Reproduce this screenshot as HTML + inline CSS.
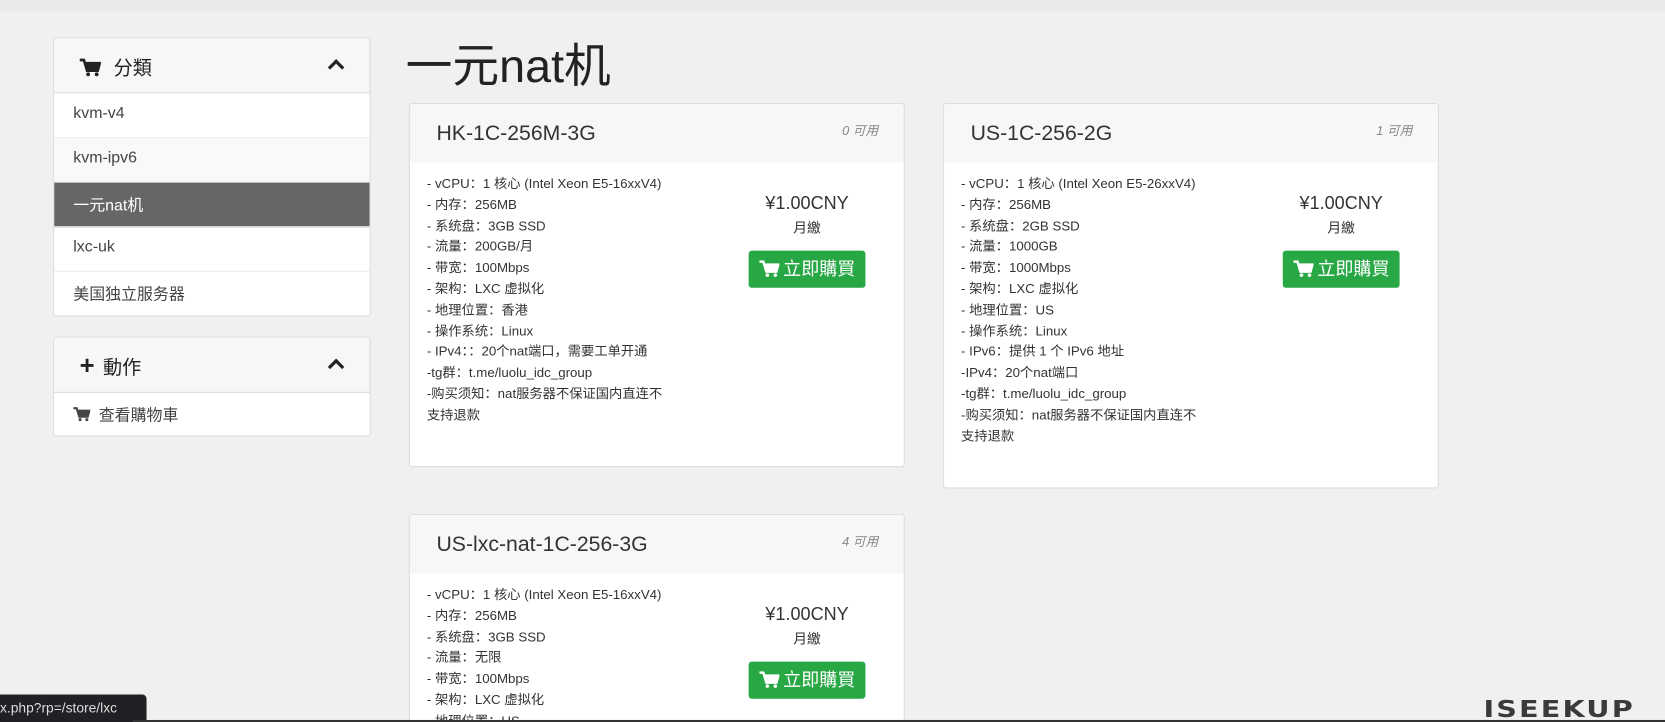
<!DOCTYPE html>
<html><head><meta charset="utf-8"><style>
*{box-sizing:border-box;margin:0;padding:0}
html,body{width:1665px;height:722px;overflow:hidden;background:#f0f0f0}
#w{position:absolute;left:0;top:0;width:1568px;height:680px;overflow:hidden;transform:scale(1.0619);transform-origin:0 0;font-family:"Liberation Sans","Noto Sans CJK SC",sans-serif;color:#333}
.abs{position:absolute}
.topbar{left:0;top:0;width:1568px;height:11px;background:#e8eaec}
.panel{background:#fff;border:1px solid #ddd;border-radius:3px;overflow:hidden;left:50px;width:299px}
.ph{height:52px;background:#f7f7f7;border-bottom:1px solid #ddd;position:relative;font-size:18px;color:#222;padding:14px 0 0 24px}
.ph .car{position:absolute;right:26px;top:22px;width:11px;height:11px;border-left:3px solid #222;border-top:3px solid #222;transform:rotate(45deg)}
.it{height:42px;border-bottom:1px solid #eee;font-size:15px;color:#444;padding:10px 0 0 18px}
.card{background:#fff;border:1px solid #ddd;border-radius:3px;overflow:hidden;width:467px}
.ch{height:55px;background:#f7f7f7;position:relative;padding:17px 0 0 25px;font-size:20px;color:#333}
.ch i{position:absolute;right:24px;top:16px;font-size:12px;color:#888}
.cb{position:relative;padding:11px 0 0 16px;font-size:12.5px;line-height:19.8px;color:#333}
.pr{position:absolute;left:300px;width:148px;top:27px;text-align:center}
.pr b{font-weight:normal;font-size:17px;display:block;line-height:24px}
.pr span{display:block;font-size:13px;margin-top:1px}
.btn{display:inline-block;margin-top:11px;background:#28a745;color:#fff;border-radius:3px;width:110px;height:35px;font-size:17px;line-height:35px}
.btn svg{vertical-align:-2px;margin-right:4px}
</style></head><body><div id="w">
<div class="abs topbar"></div>
<div class="abs panel" style="top:35px;height:263px">
<div class="ph"><svg width="20" height="17" viewBox="0 0 20 17" style="vertical-align:-2px;margin-right:12px"><path d="M0 1.5h4l3 10h10l2-7H6" fill="none" stroke="#222" stroke-width="2.5"/><path d="M5 4h14l-2 7H8z" fill="#222"/><circle cx="8" cy="15" r="1.8" fill="#222"/><circle cx="16" cy="15" r="1.8" fill="#222"/></svg>分類<div class="car"></div></div>
<div class="it">kvm-v4</div>
<div class="it" style="background:#f8f9fa">kvm-ipv6</div>
<div class="it" style="background:#666;color:#fff">一元nat机</div>
<div class="it">lxc-uk</div>
<div class="it" style="border:0">美国独立服务器</div>
</div>
<div class="abs panel" style="top:317px;height:94px">
<div class="ph"><span style="font-size:24px;font-weight:bold;margin-right:8px;line-height:18px">+</span>動作<div class="car"></div></div>
<div class="it" style="border:0;padding-left:18px"><svg width="16" height="14" viewBox="0 0 20 17" style="vertical-align:-1px;margin-right:8px"><path d="M0 1.5h4l3 10h10l2-7H6" fill="none" stroke="#444" stroke-width="2.5"/><path d="M5 4h14l-2 7H8z" fill="#444"/><circle cx="8" cy="15" r="1.8" fill="#444"/><circle cx="16" cy="15" r="1.8" fill="#444"/></svg>查看購物車</div>
</div>
<div class="abs" style="left:382px;top:37px;font-size:44px;color:#222;line-height:52px">一元nat机</div>

<div class="abs card" style="left:385px;top:97px;height:343px">
<div class="ch">HK-1C-256M-3G<i>0 可用</i></div>
<div class="cb">- vCPU：1 核心 (Intel Xeon E5-16xxV4)<br>- 内存：256MB<br>- 系统盘：3GB SSD<br>- 流量：200GB/月<br>- 带宽：100Mbps<br>- 架构：LXC 虚拟化<br>- 地理位置：香港<br>- 操作系统：Linux<br>- IPv4：：20个nat端口，需要工单开通<br>-tg群：t.me/luolu_idc_group<br>-购买须知：nat服务器不保证国内直连不<br>支持退款
<div class="pr"><b>¥1.00CNY</b><span>月繳</span><div class="btn"><svg width="19" height="16" viewBox="0 0 20 17"><path d="M0 1.5h4l3 10h10l2-7H6" fill="none" stroke="#fff" stroke-width="2.5"/><path d="M5 4h14l-2 7H8z" fill="#fff"/><circle cx="8" cy="15" r="1.8" fill="#fff"/><circle cx="16" cy="15" r="1.8" fill="#fff"/></svg>立即購買</div></div></div>
</div>
<div class="abs card" style="left:888px;top:97px;height:363px">
<div class="ch">US-1C-256-2G<i>1 可用</i></div>
<div class="cb">- vCPU：1 核心 (Intel Xeon E5-26xxV4)<br>- 内存：256MB<br>- 系统盘：2GB SSD<br>- 流量：1000GB<br>- 带宽：1000Mbps<br>- 架构：LXC 虚拟化<br>- 地理位置：US<br>- 操作系统：Linux<br>- IPv6：提供 1 个 IPv6 地址<br>-IPv4：20个nat端口<br>-tg群：t.me/luolu_idc_group<br>-购买须知：nat服务器不保证国内直连不<br>支持退款
<div class="pr"><b>¥1.00CNY</b><span>月繳</span><div class="btn"><svg width="19" height="16" viewBox="0 0 20 17"><path d="M0 1.5h4l3 10h10l2-7H6" fill="none" stroke="#fff" stroke-width="2.5"/><path d="M5 4h14l-2 7H8z" fill="#fff"/><circle cx="8" cy="15" r="1.8" fill="#fff"/><circle cx="16" cy="15" r="1.8" fill="#fff"/></svg>立即購買</div></div></div>
</div>
<div class="abs card" style="left:385px;top:484px;height:230px">
<div class="ch">US-lxc-nat-1C-256-3G<i>4 可用</i></div>
<div class="cb">- vCPU：1 核心 (Intel Xeon E5-16xxV4)<br>- 内存：256MB<br>- 系统盘：3GB SSD<br>- 流量：无限<br>- 带宽：100Mbps<br>- 架构：LXC 虚拟化<br>- 地理位置：US
<div class="pr"><b>¥1.00CNY</b><span>月繳</span><div class="btn"><svg width="19" height="16" viewBox="0 0 20 17"><path d="M0 1.5h4l3 10h10l2-7H6" fill="none" stroke="#fff" stroke-width="2.5"/><path d="M5 4h14l-2 7H8z" fill="#fff"/><circle cx="8" cy="15" r="1.8" fill="#fff"/><circle cx="16" cy="15" r="1.8" fill="#fff"/></svg>立即購買</div></div></div>
</div>
<div class="abs" style="left:0;top:654px;width:138px;height:26px;background:#202124;color:#ddd;font-size:13px;line-height:26px;border-radius:0 4px 0 0">x.php?rp=/store/lxc</div>
<div class="abs" style="left:125px;top:678px;width:1443px;height:2px;background:#333"></div>
<div class="abs" style="left:1397px;top:652px;font-size:27px;font-weight:bold;color:#3a3a3a;letter-spacing:2px;font-family:'DejaVu Sans',sans-serif;transform:scaleY(0.8);transform-origin:0 100%;line-height:27px">ISEEKUP</div>
</div></body></html>
